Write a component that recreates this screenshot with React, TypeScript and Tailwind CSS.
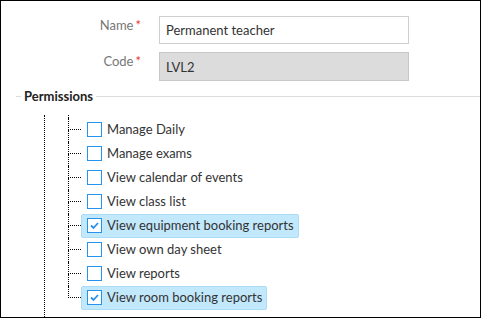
import { useState } from 'react';

type Perm = { id: string; label: string; checked: boolean };

const initialPerms: Perm[] = [
  { id: 'daily', label: 'Manage Daily', checked: false },
  { id: 'exams', label: 'Manage exams', checked: false },
  { id: 'calendar', label: 'View calendar of events', checked: false },
  { id: 'classlist', label: 'View class list', checked: false },
  { id: 'equipment', label: 'View equipment booking reports', checked: true },
  { id: 'daysheet', label: 'View own day sheet', checked: false },
  { id: 'reports', label: 'View reports', checked: false },
  { id: 'room', label: 'View room booking reports', checked: true },
];

function CheckBox({ checked }: { checked: boolean }) {
  return (
    <span className="flex h-[15px] w-[15px] shrink-0 items-center justify-center border border-[#2793ec] bg-white">
      {checked && (
        <svg width="11" height="11" viewBox="0 0 11 11">
          <polyline points="2,5.5 4.5,8 9,3" fill="none" stroke="#2793ec" strokeWidth="1.8" />
        </svg>
      )}
    </span>
  );
}

export default function App() {
  const [perms, setPerms] = useState<Perm[]>(initialPerms);

  const toggle = (id: string) =>
    setPerms(perms.map(p => (p.id === id ? { ...p, checked: !p.checked } : p)));

  return (
    <div
      className="flex h-[318px] w-[481px] flex-col overflow-hidden border border-black bg-white text-[13px] text-[#333]"
      style={{ fontFamily: 'Lato, "Open Sans", sans-serif' }}
    >
      {/* form fields */}
      <div className="flex flex-col gap-[8px] pt-[15px]">
        <div className="flex items-start">
          <div className="w-[143px] pr-[3px] text-right text-[#777]">
            Name<span className="ml-[2px] text-[#e53935]">*</span>
          </div>
          <input
            className="ml-[15px] h-[28px] w-[250px] border border-[#cfcfcf] bg-white px-[6px] text-[13px] text-[#333] outline-none"
            defaultValue="Permanent teacher"
          />
        </div>
        <div className="flex items-start">
          <div className="w-[143px] pr-[3px] text-right text-[#777]">
            Code<span className="ml-[2px] text-[#e53935]">*</span>
          </div>
          <input
            className="ml-[15px] h-[29px] w-[250px] border border-[#c8c8c8] bg-[#dcdcdc] px-[6px] text-[13px] text-[#333] outline-none"
            defaultValue="LVL2"
            disabled
          />
        </div>
      </div>

      {/* legend */}
      <div className="mt-[6px] flex items-center pl-[15px]">
        <div className="h-px w-[5px] bg-[#dddddd]" />
        <span className="px-[3px] text-[13px] font-bold text-[#222]">Permissions</span>
        <div className="h-px flex-1 bg-[#dddddd]" />
      </div>

      {/* tree */}
      <div className="ml-[43px] mt-[8px] flex-1 border-l border-dotted border-black">
        <div className="ml-[23px]">
          <div className="h-[3px] border-l border-dotted border-black" />
          {perms.map((p, i) => {
            const last = i === perms.length - 1;
            return (
              <div key={p.id} className="flex h-[24px]">
                <div className="flex w-[13px] shrink-0 flex-col">
                  <div className="h-[12px] border-b border-l border-dotted border-black" />
                  <div className={last ? 'h-[12px]' : 'h-[12px] border-l border-dotted border-black'} />
                </div>
                <button
                  type="button"
                  onClick={() => toggle(p.id)}
                  className={
                    'flex h-[24px] items-center gap-[5px] rounded-[2px] border pl-[5px] pr-[4px] text-left text-[13px] text-[#333] ' +
                    (p.checked ? 'border-[#abdcf5] bg-[#c2e8fc]' : 'border-transparent')
                  }
                >
                  <CheckBox checked={p.checked} />
                  <span>{p.label}</span>
                </button>
              </div>
            );
          })}
        </div>
      </div>
    </div>
  );
}
